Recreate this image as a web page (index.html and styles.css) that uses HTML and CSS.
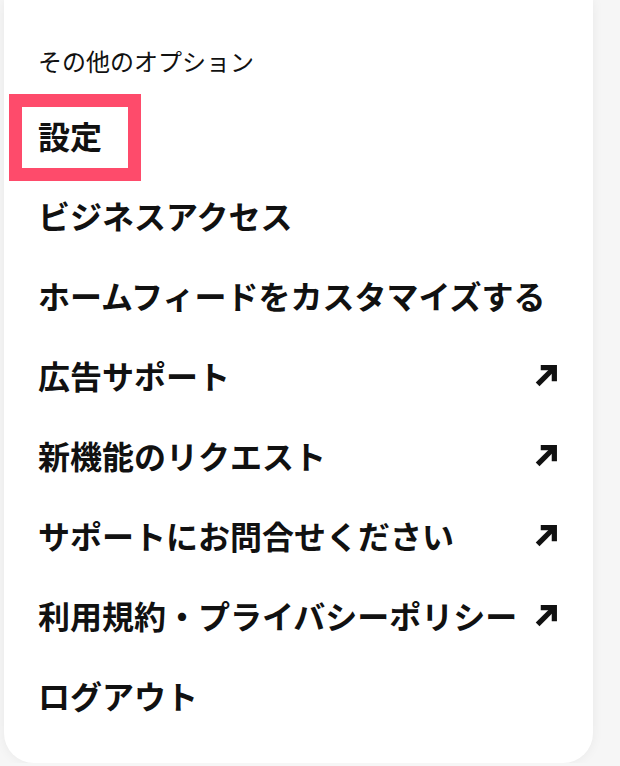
FILE: index.html
```html
<!DOCTYPE html>
<html lang="ja">
<head>
    <meta charset="UTF-8">
    <title>その他のオプション</title>
    <link rel="stylesheet" href="styles.css">
</head>
<body>
<div class="card">
    <div class="heading">その他のオプション</div>
    <ul class="menu">
        <li class="item">
            <span class="label">設定</span>
            <span class="highlight"></span>
        </li>
        <li class="item"><span class="label">ビジネスアクセス</span></li>
        <li class="item"><span class="label">ホームフィードをカスタマイズする</span></li>
        <li class="item">
            <span class="label">広告サポート</span>
            <svg class="arrow" viewBox="0 0 22 22"><path d="M2.5 19.5 L17 5"/><path d="M5.5 3.5 H18.5 V16.5"/></svg>
        </li>
        <li class="item">
            <span class="label">新機能のリクエスト</span>
            <svg class="arrow" viewBox="0 0 22 22"><path d="M2.5 19.5 L17 5"/><path d="M5.5 3.5 H18.5 V16.5"/></svg>
        </li>
        <li class="item">
            <span class="label">サポートにお問合せください</span>
            <svg class="arrow" viewBox="0 0 22 22"><path d="M2.5 19.5 L17 5"/><path d="M5.5 3.5 H18.5 V16.5"/></svg>
        </li>
        <li class="item">
            <span class="label">利用規約・プライバシーポリシー</span>
            <svg class="arrow" viewBox="0 0 22 22"><path d="M2.5 19.5 L17 5"/><path d="M5.5 3.5 H18.5 V16.5"/></svg>
        </li>
        <li class="item"><span class="label">ログアウト</span></li>
    </ul>
</div>
</body>
</html>
```

FILE: styles.css
```css
body {
    margin: 0;
    background-color: #f6f6f6;
    font-family: "Noto Sans CJK JP", "Noto Sans", sans-serif;
    color: #111111;
}
.card {
    margin-left: 4px;
    width: 589px;
    padding: 44px 0 28px;
    background-color: #ffffff;
    border-radius: 0 0 30px 30px;
    box-shadow: 0 0 12px rgba(0, 0, 0, 0.06);
}
.heading {
    padding-left: 34px;
    font-size: 24px;
    line-height: 34px;
    margin-bottom: 17px;
}
.menu {
    list-style: none;
    margin: 0;
    padding: 0;
}
.item {
    position: relative;
    display: flex;
    justify-content: space-between;
    align-items: center;
    height: 80px;
    padding: 0 35px 0 34px;
    font-size: 32px;
    font-weight: 700;
}
.label {
    white-space: nowrap;
}
.arrow {
    width: 23px;
    height: 23px;
    flex-shrink: 0;
    margin-top: 0;
}
.arrow path {
    fill: none;
    stroke: #111111;
    stroke-width: 5;
}
.highlight {
    position: absolute;
    left: 5px;
    top: -1px;
    width: 106px;
    height: 61px;
    border: 13px solid #fe4b6b;
}
```
